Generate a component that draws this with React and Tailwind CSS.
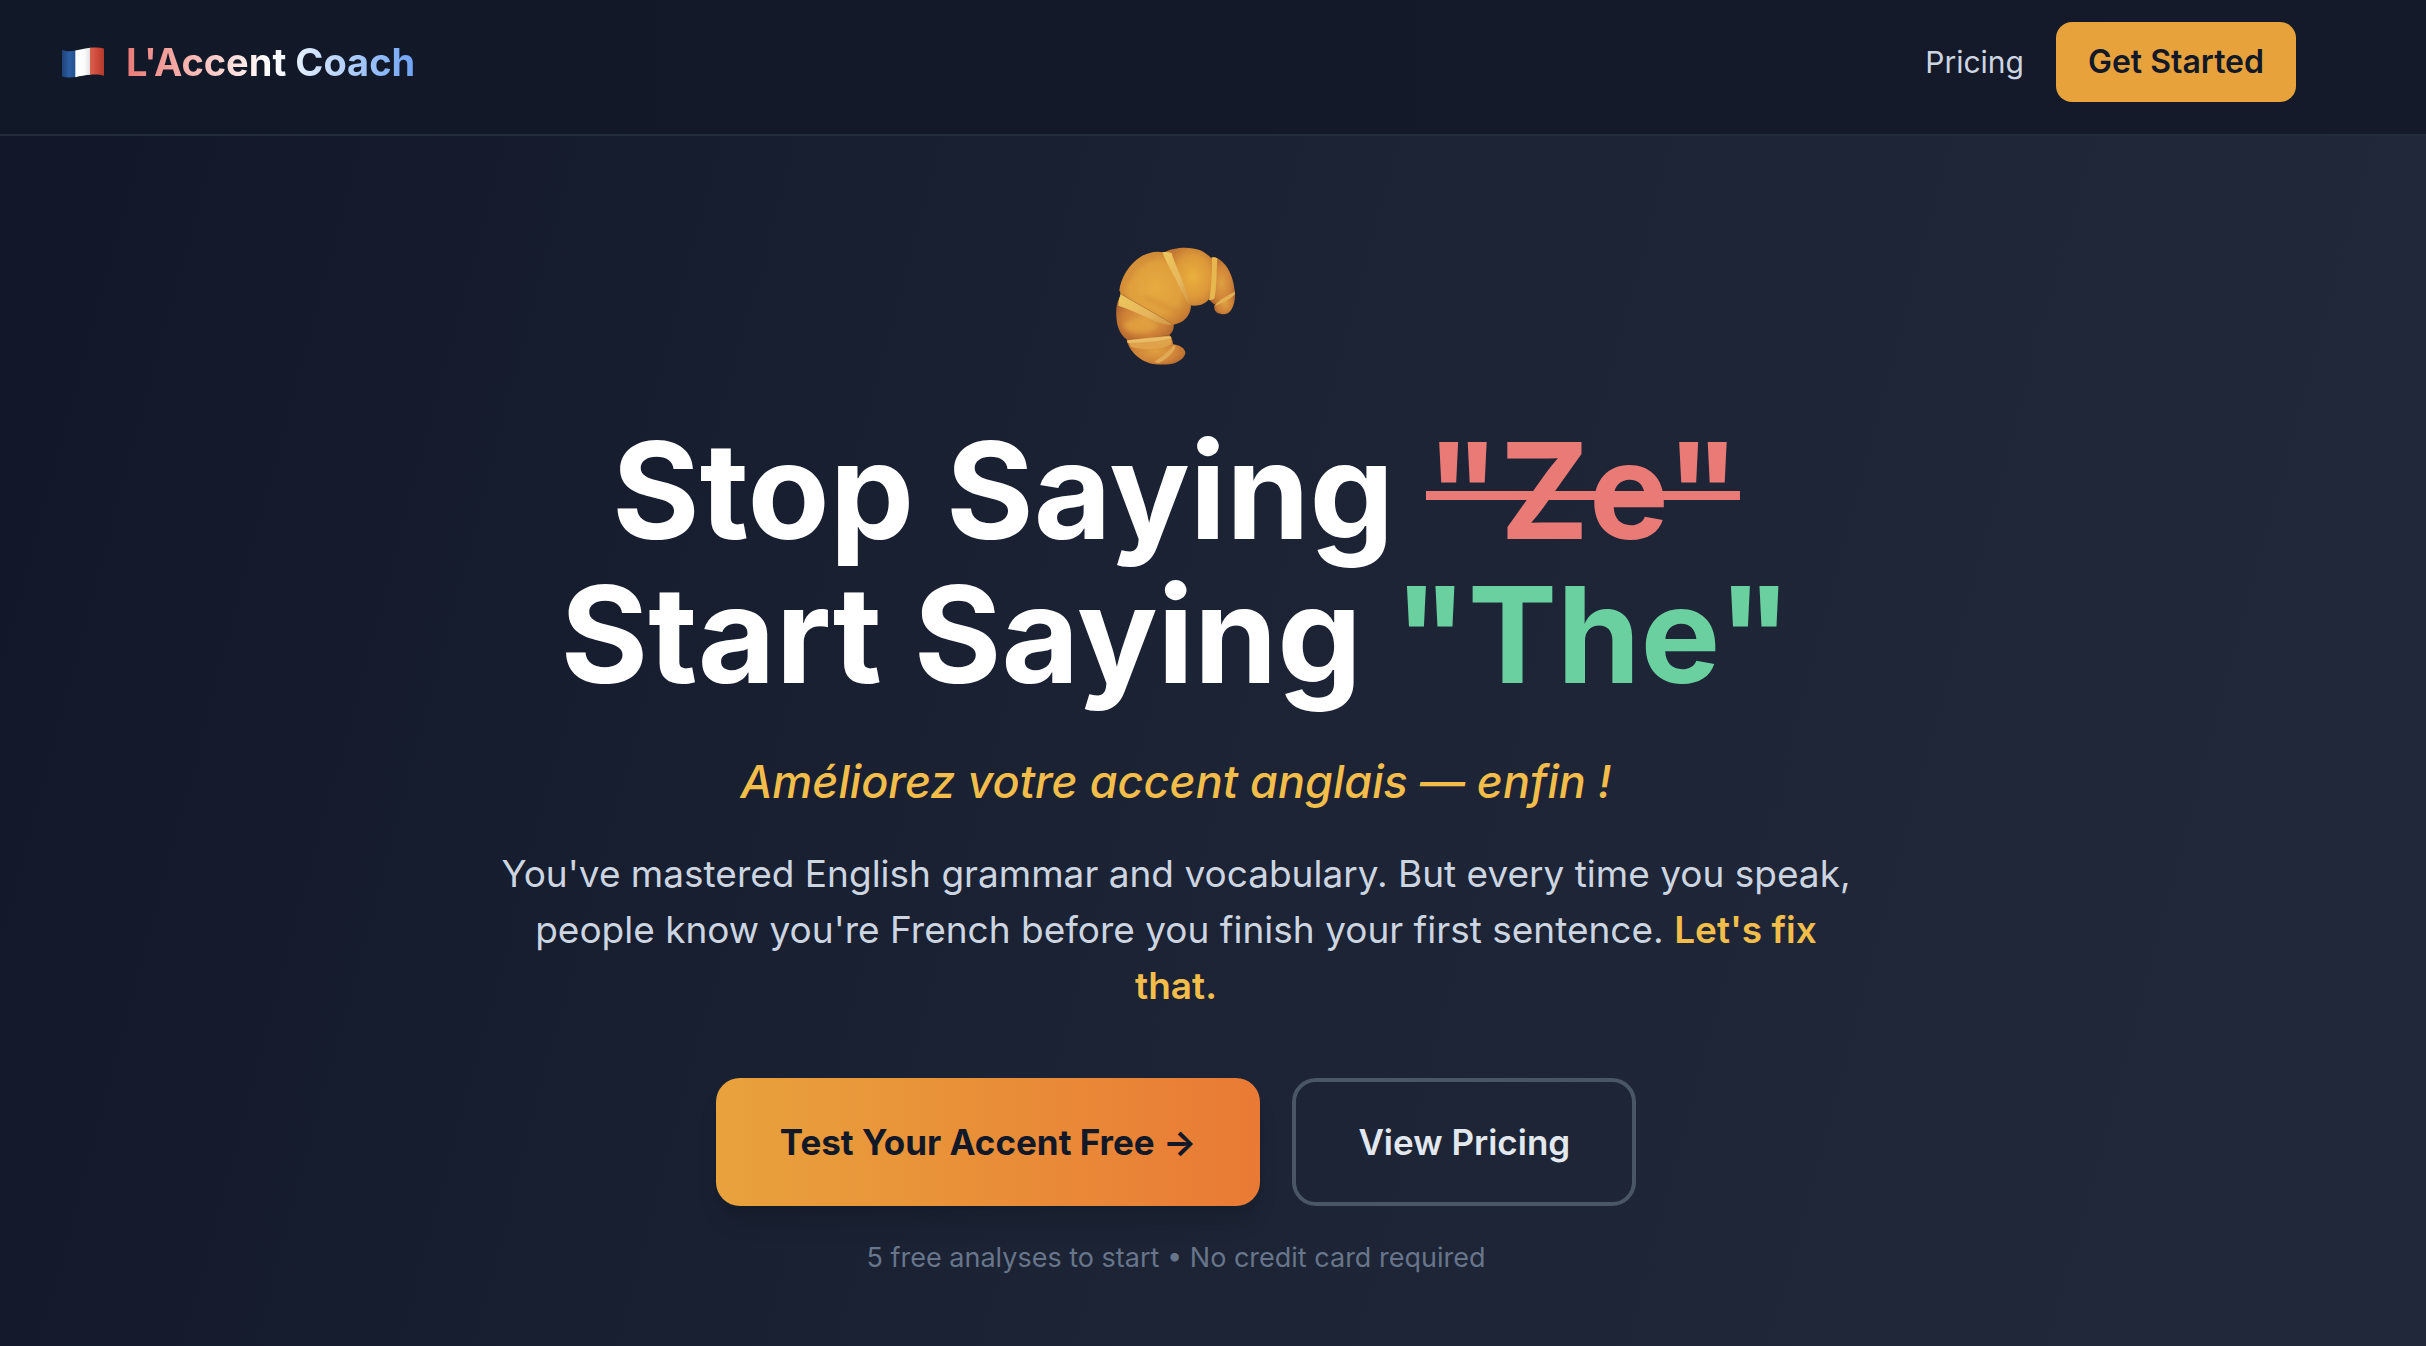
import React from 'react'

function FrenchFlag() {
  return (
    <svg viewBox="0 0 126 92" className="w-[42px] h-[31px]" aria-hidden="true">
      <defs>
        <linearGradient id="flagBlue" x1="0" x2="1">
          <stop offset="0" stopColor="#1f4278" />
          <stop offset="0.5" stopColor="#2b5ea3" />
          <stop offset="1" stopColor="#24508f" />
        </linearGradient>
        <linearGradient id="flagWhite" x1="0" x2="1">
          <stop offset="0" stopColor="#ffffff" />
          <stop offset="0.6" stopColor="#fbfbfb" />
          <stop offset="1" stopColor="#dedede" />
        </linearGradient>
        <linearGradient id="flagRed" x1="0" x2="1">
          <stop offset="0" stopColor="#d8604f" />
          <stop offset="0.5" stopColor="#cf4a3b" />
          <stop offset="1" stopColor="#b23a2d" />
        </linearGradient>
      </defs>
      <path d="M0 8 C14 14 28 13 42 10 V89 C28 92 14 92 0 88 Z" fill="url(#flagBlue)" />
      <path d="M40 10 C56 7 70 4 86 2 V83 C70 84 56 87 40 90 Z" fill="url(#flagWhite)" />
      <path d="M84 2 C100 0 114 0 126 4 V86 C114 82 100 81 84 83 Z" fill="url(#flagRed)" />
    </svg>
  )
}

function Croissant() {
  return (
    <svg viewBox="77 50 363 357" className="w-[121px] h-[119px]" aria-hidden="true">
      <defs>
        <radialGradient id="crustLarge" cx="0.5" cy="0.5" r="0.6">
          <stop offset="0" stopColor="#e6ab3f" />
          <stop offset="0.6" stopColor="#df9f3d" />
          <stop offset="1" stopColor="#c27530" />
        </radialGradient>
        <radialGradient id="crustTop" cx="0.6" cy="0.5" r="0.6">
          <stop offset="0" stopColor="#e9b03e" />
          <stop offset="0.6" stopColor="#dd9839" />
          <stop offset="1" stopColor="#c07532" />
        </radialGradient>
        <radialGradient id="crustSmall" cx="0.5" cy="0.55" r="0.6">
          <stop offset="0" stopColor="#dfa040" />
          <stop offset="0.6" stopColor="#cf8338" />
          <stop offset="1" stopColor="#ad622c" />
        </radialGradient>
        <linearGradient id="crustFold" x1="0" y1="0" x2="1" y2="1">
          <stop offset="0" stopColor="#edc75c" />
          <stop offset="0.6" stopColor="#e6b65c" />
          <stop offset="1" stopColor="#cf9442" />
        </linearGradient>
        <filter id="crustSoft">
          <feGaussianBlur stdDeviation="6" />
        </filter>
        <filter id="crustEdge">
          <feGaussianBlur stdDeviation="2" />
        </filter>
      </defs>
      {/* lower tip */}
      <path d="M108 322 C112 360 150 394 188 401 C210 404 240 403 252 399 C272 392 286 378 285 366 C282 350 262 343 248 342 C247 330 244 320 238 314 Z" fill="url(#crustSmall)" />
      <path d="M112 332 C150 322 200 320 236 317 C244 326 246 336 242 342 C220 358 160 360 122 350 Z" fill="#dfa24b" filter="url(#crustEdge)" />
      <path d="M110 330 C150 326 200 322 240 318 L244 324 C200 334 150 338 112 338 Z" fill="#e9bd67" />
      <path d="M192 394 C215 378 235 366 250 345 L256 347 C250 370 225 388 205 399 Z" fill="#dfa955" filter="url(#crustEdge)" />
      {/* lower left */}
      <path d="M88 200 C76 220 76 250 80 278 C86 304 96 318 108 326 C150 322 200 320 236 315 C246 306 252 296 250 280 Z" fill="url(#crustSmall)" />
      <ellipse cx="150" cy="286" rx="48" ry="20" fill="#e2a23f" opacity="0.8" filter="url(#crustSoft)" />
      <path d="M92 186 C140 215 200 250 250 280 C240 288 216 280 196 274 C160 256 120 238 84 226 C84 212 88 200 92 186 Z" fill="url(#crustFold)" />
      {/* upper right tip */}
      <path d="M433 178 C437 205 430 235 414 248 C402 254 386 252 378 246 C370 238 370 228 374 220 Z" fill="url(#crustSmall)" />
      <path d="M362 82 C372 78 384 84 396 94 C418 114 430 148 433 182 C416 200 394 212 371 222 C364 216 358 210 355 206 Z" fill="url(#crustSmall)" />
      <path d="M433 184 C414 194 394 204 380 218 L374 226 C396 220 420 206 434 192 Z" fill="#e4b054" />
      <path d="M364 82 C370 80 376 81 381 84 C378 120 380 170 372 206 L356 210 C360 170 364 120 364 82 Z" fill="#e6b84f" />
      {/* top */}
      <path d="M222 66 C250 50 300 48 330 60 C346 68 358 78 365 86 C366 130 362 170 358 204 C346 222 322 230 298 225 C270 180 244 120 222 66 Z" fill="url(#crustTop)" />
      {/* large middle piece */}
      <path d="M87 180 C92 140 118 100 150 80 C172 66 200 60 222 67 C240 110 280 170 302 222 C302 246 292 262 278 272 C268 278 260 281 250 283 C200 252 140 220 92 192 Z" fill="url(#crustLarge)" />
      <path d="M110 158 C130 110 160 90 196 80" fill="none" stroke="#c87a34" strokeWidth="14" opacity="0.35" filter="url(#crustSoft)" />
      <path d="M160 200 C200 216 240 232 268 250" fill="none" stroke="#cd8034" strokeWidth="12" opacity="0.4" filter="url(#crustSoft)" />
      <path d="M216 66 C226 64 236 65 244 68 C252 100 284 160 300 224 C286 210 272 180 258 150 C240 118 226 90 216 66 Z" fill="url(#crustFold)" />
      <path d="M92 191 C140 220 200 252 250 283" fill="none" stroke="#a4622a" strokeWidth="3" opacity="0.6" />
    </svg>
  )
}

function Navbar() {
  return (
    <nav className="border-b-2 border-[#222c3c] bg-linear-to-r from-[#111828] to-[#151a2a] pr-[74px]">
      <div className="max-w-[2304px] mx-auto px-8 pt-[22px] pb-8 flex items-center justify-between">
        <a href="#home" className="flex items-center gap-[22px] pl-1.5">
          <FrenchFlag />
          <span className="text-[38px] leading-14 font-bold bg-linear-to-r from-[#e97a76] via-white to-[#6ea4f4] bg-clip-text text-transparent">
            L'Accent Coach
          </span>
        </a>
        <div className="flex items-center gap-8">
          <a href="#pricing" className="text-[30px] leading-12 text-[#cdd5e1]">Pricing</a>
          <button
            type="button"
            className="bg-[#e8a23c] text-[#111828] text-[32px] leading-12 font-semibold px-8 py-4 rounded-2xl"
          >
            Get Started
          </button>
        </div>
      </div>
    </nav>
  )
}

function Hero() {
  return (
    <main className="pr-[74px]">
      <section className="flex flex-col items-center text-center pt-[111px] pb-17">
        <Croissant />
        <h1 className="mt-13 text-[134px] leading-[144px] font-bold text-white">
          Stop Saying <span className="text-[#e97a76] line-through decoration-[9px]">"Ze"</span>
          <br />
          Start Saying <span className="text-[#6ad09f]">"The"</span>
        </h1>
        <p className="mt-11 text-[45px] leading-16 font-medium italic text-[#f3bd4a]">
          Améliorez votre accent anglais — enfin !
        </p>
        <p className="mt-8 max-w-[1356px] text-[37px] leading-14 text-[#cdd5e1]">
          You've mastered English grammar and vocabulary. But every time you speak, people know
          you're French before you finish your first sentence.{' '}
          <span className="font-semibold text-[#f3bd4a]">Let's fix that.</span>
        </p>
        <div className="mt-16 flex justify-center gap-8">
          <button
            type="button"
            className="bg-linear-to-r from-[#e8a23c] to-[#e97a35] text-[#111828] text-[35px] leading-14 font-bold px-16 py-9 rounded-3xl shadow-xl"
          >
            Test Your Accent Free →
          </button>
          <button
            type="button"
            className="border-4 border-[#4a5565] text-[#e3e8ef] text-[35px] leading-14 font-semibold px-[62px] py-8 rounded-3xl"
          >
            View Pricing
          </button>
        </div>
        <p className="mt-8 text-[27px] leading-10 text-[#68758a]">
          5 free analyses to start • No credit card required
        </p>
      </section>
    </main>
  )
}

export default function App() {
  return (
    <div className="min-h-screen font-[Inter,sans-serif] bg-[linear-gradient(105deg,#111729,#1b2334_50%,#202839_90%)]">
      <Navbar />
      <Hero />
    </div>
  )
}
